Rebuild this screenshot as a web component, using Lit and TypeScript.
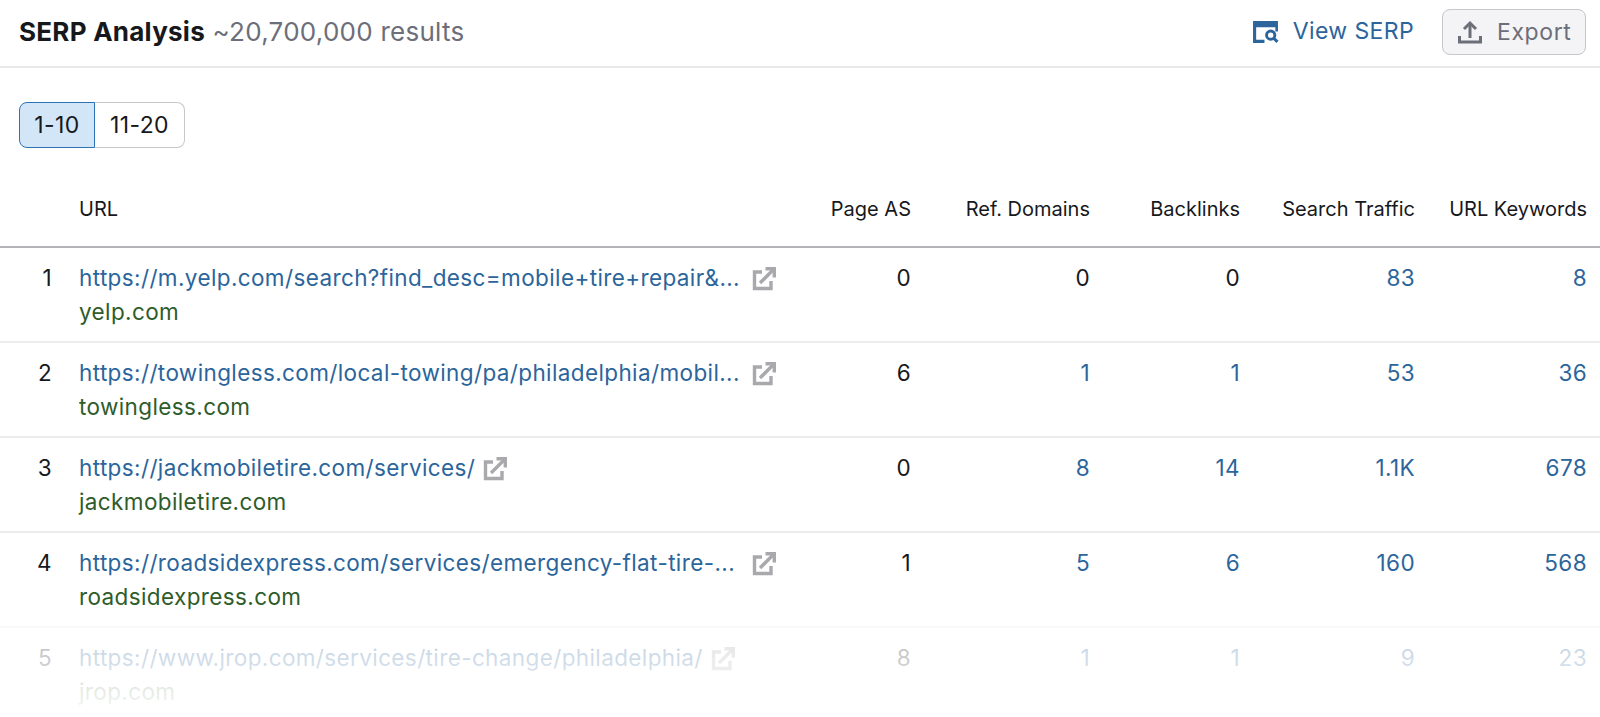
import { LitElement, html, css, svg } from "lit";
import { customElement } from "lit/decorators.js";

const rows = [
  { n: 1, url: "https://m.yelp.com/search?find_desc=mobile+tire+repair&...", dom: "yelp.com", as: "0", ref: "0", back: "0", traffic: "83", kw: "8", plain: true, trunc: true },
  { n: 2, url: "https://towingless.com/local-towing/pa/philadelphia/mobil...", dom: "towingless.com", as: "6", ref: "1", back: "1", traffic: "53", kw: "36", trunc: true },
  { n: 3, url: "https://jackmobiletire.com/services/", dom: "jackmobiletire.com", as: "0", ref: "8", back: "14", traffic: "1.1K", kw: "678" },
  { n: 4, url: "https://roadsidexpress.com/services/emergency-flat-tire-...", dom: "roadsidexpress.com", as: "1", ref: "5", back: "6", traffic: "160", kw: "568", trunc: true },
  { n: 5, url: "https://www.jrop.com/services/tire-change/philadelphia/", dom: "jrop.com", as: "8", ref: "1", back: "1", traffic: "9", kw: "23" },
];

const extIcon = svg`<svg class="ext" viewBox="0 0 24 24" width="24" height="24" fill="none" stroke="#a9a9ad" stroke-width="3.400"><path d="M10 5H2.500V21.500H19V14"/><path d="M8 16L21 3"/><path d="M13.500 1.700H22.300V10.500" /></svg>`;

@customElement("app-root")
export class AppRoot extends LitElement {
  static styles = css`
    :host { display: block; width: 1600px; height: 717px; overflow: hidden; position: relative; background: #fff;
      font-family: Inter, "Liberation Sans", sans-serif; color: #17181c; font-size: 22.500px; letter-spacing: 0.38px; }
    .top { display: flex; align-items: center; justify-content: space-between; height: 68px; box-sizing: border-box;
      border-bottom: 2px solid #e9e9eb; padding: 0 14px 4px 19px; }
    .title { font-size: 26px; letter-spacing: 0.25px; white-space: nowrap; }
    .title b { font-weight: 700; color: #17181c; }
    .title span { color: #6c6e79; }
    .actions { display: flex; align-items: center; margin-top: 2px; }
    .view { display: flex; align-items: center; gap: 14px; color: #2b659b; font-size: 23px; margin-right: 28px; margin-top: -2px; }
    .export { display: flex; align-items: center; gap: 15px; box-sizing: border-box; width: 144px; height: 46px; padding-left: 15px;
      border: 1.500px solid #c6c7cb; border-radius: 8px; background: #f4f4f6; color: #6c6e79; font-size: 23px; letter-spacing: 0.6px; line-height: 40px; }
    .pager { display: flex; margin: 34px 0 0 19px; height: 46px; width: 166px; box-sizing: border-box; }
    .pager div { display: flex; align-items: center; justify-content: center; box-sizing: border-box; font-size: 23px; }
    .p1 { width: 76px; background: #d3e6f8; border: 1.500px solid #2b73b5; border-radius: 8px 0 0 8px; }
    .p2 { flex: 1; border: 1.500px solid #c6c7cb; border-left: none; border-radius: 0 8px 8px 0; }
    .row { display: grid; grid-template-columns: 79px 1fr 130px 179px 150px 175px 172px; padding-right: 13px; }
    .head { margin-top: 42px; height: 56px; font-size: 20px; letter-spacing: 0; border-bottom: 2px solid #b4b4b8; }
    .head > div { padding-top: 7px; }
    .num { text-align: right; }
    .body { border-bottom: 2px solid #ececee; padding-top: 13px; height: 80px; line-height: 34px; }
    .idx { text-align: right; padding-right: 27px; }
    .url { display: flex; align-items: center; height: 34px; color: #2b659b; white-space: nowrap; }
    .trunc { width: 665px; }
    .ext { margin-left: 8px; margin-top: 2px; flex: none; }
    .dom { color: #2e5c2a; }
    .link { color: #2b659b; }
    .fade { position: absolute; left: 0; right: 0; top: 620px; bottom: 0; pointer-events: none;
      background: linear-gradient(rgba(255,255,255,0.68), rgba(255,255,255,0.8) 50%, rgba(255,255,255,0.97)); }
  `;

  render() {
    return html`
      <div class="top">
        <div class="title"><b>SERP Analysis</b> <span>~20,700,000 results</span></div>
        <div class="actions">
          <div class="view">
            <svg width="27" height="23" viewBox="0 0 26 22" fill="none">
              <path d="M1 1H25V11H22.500V7H4V19H12V22H1Z" fill="#2b659b"/>
              <circle cx="18" cy="14.500" r="4" stroke="#2b659b" stroke-width="2.800"/>
              <path d="M21 17.500L24.500 21" stroke="#2b659b" stroke-width="3"/>
            </svg>
            View SERP
          </div>
          <div class="export">
            <svg width="24" height="24" viewBox="0 0 24 24" fill="none" stroke="#6c6e79" stroke-width="3">
              <path d="M12 18V3.500"/><path d="M6 9L12 3L18 9"/><path d="M1.500 16V22H22.500V16"/>
            </svg>
            Export
          </div>
        </div>
      </div>
      <div class="pager"><div class="p1">1-10</div><div class="p2">11-20</div></div>
      <div class="row head">
        <div></div><div>URL</div><div class="num">Page AS</div><div class="num">Ref. Domains</div>
        <div class="num">Backlinks</div><div class="num">Search Traffic</div><div class="num">URL Keywords</div>
      </div>
      ${rows.map((r) => html`
        <div class="row body">
          <div class="idx">${r.n}</div>
          <div>
            <div class="url"><span class=${r.trunc ? "trunc" : ""}>${r.url}</span>${extIcon}</div>
            <div class="dom">${r.dom}</div>
          </div>
          <div class="num">${r.as}</div>
          <div class="num ${r.plain ? "" : "link"}">${r.ref}</div>
          <div class="num ${r.plain ? "" : "link"}">${r.back}</div>
          <div class="num link">${r.traffic}</div>
          <div class="num link">${r.kw}</div>
        </div>`)}
      <div class="fade"></div>
    `;
  }
}
